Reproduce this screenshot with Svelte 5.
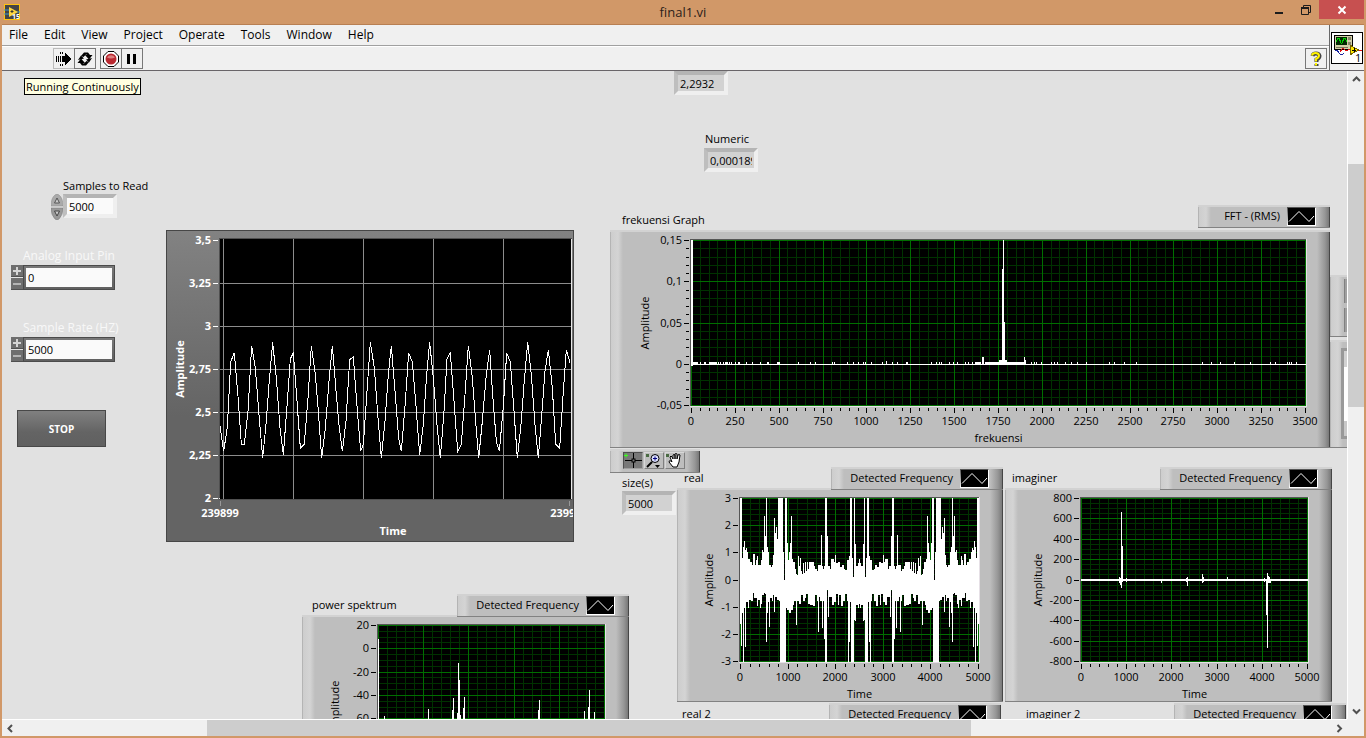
<script>
  const menus = ['File', 'Edit', 'View', 'Project', 'Operate', 'Tools', 'Window', 'Help'];

  // voltage trace, x/y in thirds of a pixel inside the plot
  const voltage = [
    [0, 562], [11, 637], [22, 565], [32, 369], [43, 341], [54, 472], [64, 615], [73, 615], [84, 517], [95, 320],
    [106, 387], [117, 527], [128, 657], [138, 557], [147, 437], [158, 310], [169, 417], [180, 567], [190, 647], [201, 502],
    [211, 360], [220, 342], [231, 487], [241, 627], [253, 615], [264, 477], [274, 320], [286, 407], [295, 517], [305, 657],
    [316, 567], [327, 427], [337, 320], [349, 467], [357, 557], [367, 637], [378, 547], [389, 362], [400, 354], [411, 502],
    [422, 635], [430, 617], [441, 457], [451, 310], [463, 387], [474, 537], [484, 657], [495, 547], [505, 407], [514, 320],
    [525, 457], [536, 597], [544, 637], [555, 502], [566, 342], [577, 369], [588, 502], [599, 647], [610, 557], [620, 407],
    [629, 310], [640, 417], [651, 557], [661, 657], [672, 517], [681, 360], [691, 342], [702, 487], [713, 637], [724, 615],
    [735, 467], [745, 320], [757, 417], [767, 547], [776, 657], [787, 547], [798, 417], [809, 332], [818, 467], [829, 607],
    [838, 637], [850, 502], [860, 342], [871, 369], [882, 517], [892, 657], [903, 557], [912, 437], [923, 310], [934, 407],
    [945, 557], [955, 657], [966, 517], [975, 397], [985, 332], [997, 447], [1007, 615], [1019, 627], [1030, 457], [1039, 332],
    [1050, 372]
  ];
  const voltagePoints = voltage.map(([x, y]) => `${x / 3},${y / 3}`).join(' ');

  // upper and lower edge of the real part, first half only: the spectrum is mirrored
  const upper = [
    [0, 3], [2, 0.8], [3, 1.2], [4, 1.4], [5, 1.1], [6, 1.15], [7, 1], [8, 0.75], [10, 0.65], [12, 0.55], [13, 0.95],
    [14, 0.95], [15, 0.55], [16, 0.7], [17, 0.85], [18, 0.55], [20, 0.55], [21, 0.7], [22, 1.1], [23, 1], [24, 2.35],
    [25, 1.6], [26, 3], [27, 1.2], [28, 1], [29, 0.55], [31, 0.45], [32, 0.55], [33, 0.9], [34, 2.25], [35, 1.7],
    [36, 1.95], [37, 1.5], [38, 3], [42, 3], [43, 1], [44, 0], [45, 3], [46, 3], [47, 1.35], [48, 0.7], [49, 1],
    [50, 1.35], [51, 2.35], [52, 0.75], [53, 0.65], [55, 0.4], [56, 0.2], [57, 0.15], [58, 0.85], [59, 0.5], [60, 0.8],
    [61, 0.3], [62, 0.2], [63, 0.6], [64, 0.25], [65, 0.65], [66, 0.3], [67, 0.65], [68, 0.4], [69, 0.65], [72, 0.65],
    [74, 0.5], [75, 0.4], [77, 0.3], [78, 0.55], [80, 0.55], [81, 1.65], [82, 0.5], [83, 0.4], [84, 0.5], [85, 3],
    [86, 3], [87, 1.6], [88, 0.5], [90, 0.4], [91, 0.75], [93, 0.75], [94, 0.65], [95, 0.9], [96, 0.6], [98, 0.65],
    [100, 0.45], [102, 0.55], [104, 0.4], [105, 0.35], [107, 0.7], [109, 0.85], [110, 3], [111, 3], [112, 0.8], [113, 0.1],
    [114, 3], [115, 1.3], [116, 0.5], [118, 0.6], [119, 0.75]
  ];
  const lower = [
    [0, -1.6], [1, -2.4], [2, -1.2], [3, -3], [4, -1], [5, -2.45], [6, -0.8], [8, -1], [9, -0.7], [11, -0.75],
    [13, -0.45], [14, -0.65], [16, -0.65], [17, -0.95], [18, -0.7], [20, -1], [21, -0.85], [22, -0.55], [24, -0.45],
    [25, -0.5], [26, -2.25], [27, -1.2], [28, -0.8], [29, -1.7], [30, -0.65], [32, -0.75], [33, -0.55], [34, -1.15],
    [35, -0.6], [37, -0.7], [39, -0.75], [40, -3], [45, -3], [46, -1], [47, -1.1], [49, -1.2], [51, -1.1], [53, -0.9],
    [54, -0.75], [56, -1.65], [57, -0.75], [59, -0.85], [61, -0.55], [63, -0.75], [65, -0.65], [66, -0.5], [68, -0.85],
    [70, -0.9], [73, -0.95], [75, -0.55], [77, -0.75], [78, -1.9], [79, -0.6], [80, -0.75], [82, -1.75], [83, -0.75],
    [84, -2.15], [85, -3], [86, -3], [87, -0.35], [88, -1.35], [89, -0.6], [91, -0.6], [92, -0.9], [94, -0.8],
    [96, -0.5], [98, -0.9], [99, -0.55], [101, -0.95], [103, -0.75], [105, -0.5], [107, -0.75], [108, -3], [109, -2.25],
    [110, -0.8], [111, -3], [113, -3], [114, -1.45], [115, -1.5], [116, -0.9], [118, -1], [119, -0.85]
  ];

  function edgeAt(edge, i) {
    const p = i > 119 ? 238 - i : i;
    let value = edge[0][1];
    for (const [x, v] of edge) if (x <= p) value = v;
    return value;
  }

  const realBars = Array.from({ length: 239 }, (_, i) => [i, edgeAt(upper, i), edgeAt(lower, i)]);

  const noise = [
    2, 3, 4, 5, 6, 9, 13, 14, 18, 19, 20, 21, 22, 23, 24, 25, 27, 29, 32, 34, 35, 36, 38, 40, 44, 47, 48, 55, 61, 69,
    76, 77, 86, 87, 88, 107, 119, 124, 141, 143, 156, 162, 167, 172, 174, 180, 191, 195, 201, 206, 215, 216, 240, 245,
    248, 250, 258, 262, 266, 274, 277, 281, 284, 285, 286, 287, 288, 289, 294, 296, 298, 340, 343, 345, 350, 360, 363,
    366, 374, 380, 386, 395, 418, 423, 433, 445, 511, 520, 529, 543, 559, 579, 584, 596, 598, 600, 605
  ];

  const fftBars = [
    [0, 0.15, -0.001], [1, 0.15, -0.001],
    ...noise.map((x) => [x, 0.0018, 0]),
    [195, 0.003, 0], [291, 0.008, 0], [292, 0.008, 0],
    ...Array.from({ length: 40 }, (_, i) => [294 + i, 0.0018, 0]),
    ...[308, 309, 310, 311, 312, 313, 314, 315].map((x) => [x, 0.004, 0]),
    [311, 0.115, 0], [312, 0.15, 0], [313, 0.05, 0], [333, 0.008, 0], [334, 0.004, 0]
  ];

  const imagBars = [
    [38, 20, -20], [39, 10, -45], [40, 660, -70], [41, 330, -15], [45, 10, -10], [80, 0, -20], [105, 10, -15],
    [106, 20, -55], [121, 50, -20], [122, 20, -15], [146, 20, 0], [183, 10, -15], [185, 0, -340], [186, 65, -665],
    [187, 30, -20], [188, 20, -20], [189, 0, -20]
  ];

  const powerBars = [
    [0, 8], [6, -58], [50, -52], [74, -53], [75, -43], [79, -56], [80, -13], [81, -27], [82, -57], [85, -51],
    [86, -42], [160, -53], [161, -44], [206, -54], [210, -50], [211, -36], [216, -55]
  ].map(([x, v]) => [x, v, -120]);

  const graphs = [
    {
      name: 'frekuensi Graph', x: 608, y: 159, w: 720, h: 218, labelX: 620, labelY: 141,
      plot: { x: 81, y: 10, w: 615, h: 166 }, yTitleX: 39, xTitle: 'frekuensi',
      xTicks: Array.from({ length: 15 }, (_, i) => String(i * 250)),
      yTicks: ['0,15', '0,1', '0,05', '0', '-0,05'],
      xMinor: 5, yMinor: 5, minorYTicks: true, max: 0.15, min: -0.05, base: 1, bars: fftBars,
      legend: { text: 'FFT - (RMS)', x: 1196, y: 134, w: 132 }
    },
    {
      name: 'real', x: 675, y: 417, w: 326, h: 214, labelX: 682, labelY: 399,
      plot: { x: 63, y: 10, w: 239, h: 164 }, yTitleX: 36, xTitle: 'Time',
      xTicks: ['0', '1000', '2000', '3000', '4000', '5000'],
      yTicks: ['3', '2', '1', '0', '-1', '-2', '-3'],
      xMinor: 5, yMinor: 5, max: 3, min: -3, base: 1, bars: realBars,
      legend: { text: 'Detected Frequency', x: 829, y: 396, w: 172 }
    },
    {
      name: 'imaginer', x: 1003, y: 417, w: 327, h: 214, labelX: 1010, labelY: 399,
      plot: { x: 76, y: 10, w: 227, h: 164 }, yTitleX: 37, xTitle: 'Time',
      xTicks: ['0', '1000', '2000', '3000', '4000', '5000'],
      yTicks: ['800', '600', '400', '200', '0', '-200', '-400', '-600', '-800'],
      xMinor: 5, yMinor: 4, max: 800, min: -800, base: 2, bars: imagBars,
      legend: { text: 'Detected Frequency', x: 1158, y: 396, w: 172 }
    },
    {
      name: 'power spektrum', x: 300, y: 544, w: 327, h: 214, labelX: 310, labelY: 526,
      plot: { x: 76, y: 10, w: 227, h: 164 }, yTitleX: 37, xTitle: 'Time',
      xTicks: ['0', '1000', '2000', '3000', '4000', '5000'],
      yTicks: ['20', '0', '-20', '-40', '-60', '-80', '-100', '-120'],
      xMinor: 5, yMinor: 4, max: 20, min: -120, base: 0, bars: powerBars,
      legend: { text: 'Detected Frequency', x: 455, y: 523, w: 172 }
    },
    {
      name: 'real 2', x: 674, y: 653, w: 326, h: 214, labelX: 680, labelY: 635,
      plot: { x: 63, y: 10, w: 239, h: 164 }, yTitleX: 36, xTitle: 'Time',
      xTicks: [], yTicks: [], xMinor: 5, yMinor: 5, max: 3, min: -3, base: 0, bars: [],
      legend: { text: 'Detected Frequency', x: 827, y: 632, w: 172 }
    },
    {
      name: 'imaginer 2', x: 1018, y: 653, w: 327, h: 214, labelX: 1024, labelY: 635,
      plot: { x: 76, y: 10, w: 227, h: 164 }, yTitleX: 37, xTitle: 'Time',
      xTicks: [], yTicks: [], xMinor: 5, yMinor: 5, max: 3, min: -3, base: 0, bars: [],
      legend: { text: 'Detected Frequency', x: 1172, y: 632, w: 172 }
    }
  ];

  function steps(ticks, minor, start, size) {
    const count = (ticks.length - 1) * minor;
    const out = [];
    for (let i = 0; i <= count; i++) {
      out.push({ pos: Math.round(start + (i * (size - 1)) / count), major: i % minor === 0, text: ticks[i / minor] });
    }
    // bright lines last so they stay on top
    return out.sort((a, b) => a.major - b.major);
  }

  function barPath(g) {
    const { x, y, h } = g.plot;
    const at = (v) => Math.round(y + ((g.max - v) / (g.max - g.min)) * (h - 1));
    return g.bars.map(([px, top, bottom]) => `M${x + px} ${at(top)}h1V${at(bottom) + 1}h-1z`).join('');
  }

  const zeroLine = (g) => Math.round(g.plot.y + (g.max / (g.max - g.min)) * (g.plot.h - 1));

  const clusters = [
    { id: 'pin', label: 'Analog Input Pin', value: '0', y: 177 },
    { id: 'rate', label: 'Sample Rate (HZ)', value: '5000', y: 249 }
  ];

  const timeTicks = ['3,5', '3,25', '3', '2,75', '2,5', '2,25', '2'];
</script>

{#snippet graphPanel(g)}
  {@const p = g.plot}
  {@const xs = steps(g.xTicks, g.xMinor, p.x, p.w)}
  {@const ys = steps(g.yTicks, g.yMinor, p.y, p.h)}
  <span class="caption" style="left: {g.labelX}px; top: {g.labelY}px">{g.name}</span>
  <figure class="panel" style="left: {g.x}px; top: {g.y}px; width: {g.w}px; height: {g.h}px">
    <svg width={g.w} height={g.h} shape-rendering="crispEdges" role="img" aria-label={g.name}>
      <rect x={p.x - 1} y={p.y - 1} width={p.w + 2} height={p.h + 2} fill="#e6e0e6" />
      <path d="M{p.x - 1} {p.y + p.h}V{p.y - 1}H{p.x + p.w}v1H{p.x}V{p.y + p.h}z" fill="#555" />
      <rect x={p.x} y={p.y} width={p.w} height={p.h} fill="#000" />
      {#each xs as t}
        {#if !t.major}<rect x={t.pos} y={p.y} width="1" height={p.h} fill="#003200" />{/if}
      {/each}
      {#each ys as t}
        <rect x={p.x} y={t.pos} width={p.w} height="1" fill={t.major ? '#006e00' : '#003200'} />
      {/each}
      {#each xs as t}
        {#if t.major}<rect x={t.pos} y={p.y} width="1" height={p.h} fill="#006e00" />{/if}
        <rect x={t.pos} y={p.y + p.h + 2} width="1" height={t.major ? 5 : 3} fill="#000" />
        {#if t.text}<text x={t.pos} y={p.y + p.h + 19} text-anchor="middle">{t.text}</text>{/if}
      {/each}
      {#each ys as t}
        {#if t.major}
          <rect x={p.x - 7} y={t.pos} width="5" height="1" fill="#000" />
          <text x={p.x - 9} y={t.pos + 4} text-anchor="end">{t.text}</text>
        {:else if g.minorYTicks}
          <rect x={p.x - 5} y={t.pos} width="3" height="1" fill="#000" />
        {/if}
      {/each}
      {#if g.base}
        <rect x={p.x} y={zeroLine(g) + 1 - g.base} width={p.w} height={g.base} fill="#fff" />
      {/if}
      <path d={barPath(g)} fill="#fff" />
      <text class="title" x={p.x + p.w / 2} y={p.y + p.h + 36} text-anchor="middle">{g.xTitle}</text>
      <text class="title" transform="translate({g.yTitleX} {p.y + p.h / 2}) rotate(-90)" text-anchor="middle">Amplitude</text>
    </svg>
  </figure>
  <div class="panel legend" style="left: {g.legend.x}px; top: {g.legend.y}px; width: {g.legend.w}px">
    <span>{g.legend.text}</span>
    <svg width="29" height="19" viewBox="0 0 29 19">
      <rect width="29" height="19" fill="#fff" />
      <path d="M0 19V0h29L28 1H1z" fill="#555" />
      <rect x="1" y="1" width="27" height="17" />
      <path d="M2 14.500L12 4.500L22 14.500L27 9" fill="none" stroke="#fff" />
    </svg>
  </div>
{/snippet}

<div class="window">
  <header class="titlebar">
    <svg class="logo" width="16" height="16" viewBox="0 0 16 16">
      <rect width="16" height="16" fill="#ffc20e" />
      <rect x="1" y="1" width="14" height="14" fill="#454545" />
      <path d="M0 6h5M0 10h5M12 8h4" stroke="#3d96c8" stroke-width="1" />
      <path d="M5 3v10l9-5z" fill="#ffd63d" />
      <path d="M6.500 7.500h3M8 6v3" stroke="#333" />
      <text x="8" y="15" class="tiny">15</text>
    </svg>
    <h1>final1.vi</h1>
    <div class="window-buttons">
      <button aria-label="Minimize">
        <svg width="12" height="12" viewBox="0 0 12 12"><path d="M2 8h8v2H2z" fill="#1c1c1c" /></svg>
      </button>
      <button aria-label="Restore">
        <svg width="12" height="12" viewBox="0 0 12 12" fill="none" stroke="#1c1c1c"><path d="M3.500 3V1.500h7v7H9" /><path d="M1.500 4h7v6.500h-7z" /><path d="M1 4h8" stroke-width="2" /></svg>
      </button>
      <button class="close" aria-label="Close">
        <svg width="10" height="10" viewBox="0 0 10 10"><path d="M1.500 1.500l7 7M8.500 1.500l-7 7" stroke="#fff" stroke-width="2" /></svg>
      </button>
    </div>
  </header>

  <div class="bars">
    <div class="bars-left">
      <nav class="menubar">
        {#each menus as menu}
          <a href="#{menu.toLowerCase()}">{menu}</a>
        {/each}
      </nav>
      <div class="toolbar">
        <button class="tool pale" aria-label="Run">
          <svg width="16" height="14" viewBox="0 0 16 14" shape-rendering="crispEdges">
            <path d="M0 4h1v6H0zM2 4h1v6H2zM4 4h1v6H4zM4 0h1v2H4zM6 0h1v2H6zM4 12h1v2H4zM6 12h1v2H6z" />
            <path d="M6 4h3V1l6 6-6 6v-3H6z" />
          </svg>
        </button>
        <button class="tool" aria-label="Run Continuously">
          <svg width="16" height="14" viewBox="0 0 16 14">
            <path d="M4 4L7 0.500h4L13 3h2.500l-3.500 4.500L8 3h2.500L9 2.500 6.500 5z" />
            <path d="M12 10l-3 3.500H5L3 11H0.500L4 6.500 8 11H5.500l1.500 0.500L9.500 9z" />
            <path d="M1 8L4 3.500l3 3zM15 6l-3 4.500-3-3z" />
          </svg>
        </button>
        <button class="tool gap" aria-label="Abort">
          <svg width="16" height="16" viewBox="0 0 16 16">
            <path d="M5 0.500h6l4.500 4.500v6L11 15.500H5L0.500 11V5z" fill="#fff" stroke="#000" />
            <circle cx="8" cy="8" r="5.500" fill="#b92830" />
            <path d="M4 6.500a4.500 4 0 0 1 8 0q-4 2-8 0z" fill="#dc8080" />
          </svg>
        </button>
        <button class="tool" aria-label="Pause">
          <svg width="12" height="12" viewBox="0 0 12 12"><path d="M1 1h3v10H1zM7 1h3v10H7z" /></svg>
        </button>
        <button class="tool help" aria-label="Help">
          <svg width="14" height="16" viewBox="0 0 14 16">
            <path d="M3.500 5Q4 2.500 7 2.500t3.500 2.500Q10.500 7 7.500 8.500v2.500M7.500 13v2" fill="none" stroke="#444" stroke-width="4" />
            <path d="M3 4.500Q3.500 2 6.500 2t3.500 2.500Q10 6.500 7 8v2.500M7 12v2.500" fill="none" stroke="#fff200" stroke-width="2" />
          </svg>
        </button>
      </div>
    </div>
    <div class="vi-icon">
      <svg width="32" height="32" viewBox="0 0 32 32" shape-rendering="crispEdges">
        <rect x="0.500" y="0.500" width="31" height="31" fill="#fff" stroke="#000" />
        <rect x="3.500" y="3.500" width="18" height="14" fill="#d2cfa8" stroke="#000" />
        <rect x="5" y="5" width="11" height="8" fill="#002800" />
        <path d="M5 10l2-4h1l2 5h1l2-5h1l2 4" fill="none" stroke="#00d000" />
        <path d="M17 5h3v3h-3zM17 10h3v3h-3z" fill="#87876c" />
        <path d="M5 15h12" stroke="#77775c" />
        <path d="M4 18h2l2 3q3 3 5 0" fill="none" stroke="#1824a0" />
        <path d="M9 20l3-4 3 3 4-2h3M27 18h4" fill="none" stroke="#e01010" />
        <path d="M19.500 13.500l8 4.500-8 4.500z" fill="#ffe800" stroke="#786400" />
        <path d="M21 18h4M23 16v4" stroke="#000" />
        <text x="24" y="30">1</text>
      </svg>
    </div>
  </div>

  <div class="body">
    <main class="canvas">
      <div class="tooltip" role="tooltip">Running Continuously</div>

      <div class="readout mean">
        <input class="sunken" readonly value="2,2932" aria-label="Mean" />
      </div>
      <div class="readout numeric">
        <label for="numeric">Numeric</label>
        <input id="numeric" class="sunken" readonly value="0,000189" />
      </div>

      <div class="samples">
        <label for="samples">Samples to Read</label>
        <div class="row">
          <div class="spinner">
            <button aria-label="Increase samples">
              <svg width="12" height="13" viewBox="0 0 12 13"><path d="M0 12Q0 4 4 1q2-2 4 0 4 3 4 11z" fill="#aaa" stroke="#888" stroke-width="0.500" /><path d="M3.500 9L6 4l2.500 5z" fill="#ccc" stroke="#555" /></svg>
            </button>
            <button aria-label="Decrease samples">
              <svg width="12" height="13" viewBox="0 0 12 13"><path d="M0 1h12q0 7-4 11-2 2-4 0Q0 8 0 1z" fill="#999" stroke="#777" stroke-width="0.500" /><path d="M3.500 4L6 9l2.500-5z" fill="#ccc" stroke="#444" /></svg>
            </button>
          </div>
          <input id="samples" class="sunken white" value="5000" />
        </div>
      </div>

      {#each clusters as c}
        <div class="cluster" style="top: {c.y}px">
          <label for={c.id}>{c.label}</label>
          <div class="row">
            <div class="plusminus">
              <button aria-label="Increase {c.label}"><svg width="10" height="10" viewBox="0 0 10 10"><path d="M1 5h8M5 1v8" stroke="#d4d4d4" stroke-width="2" /></svg></button>
              <button aria-label="Decrease {c.label}"><svg width="10" height="10" viewBox="0 0 10 10"><path d="M1 5h8" stroke="#b4b4b4" stroke-width="2" /></svg></button>
            </div>
            <div class="dark-field"><input id={c.id} value={c.value} /></div>
          </div>
        </div>
      {/each}

      <button class="stop">STOP</button>

      <figure class="time-chart">
        <svg width="406" height="310" role="img" aria-label="Amplitude over time">
          <g shape-rendering="crispEdges">
            <rect x="52" y="7" width="353" height="262" fill="#505050" />
            <path d="M52 268h353V8h-1v259H52z" fill="#e8e8e8" />
            <rect x="53" y="8" width="351" height="260" fill="#000" />
            {#each [56, 126, 196, 266, 336] as x}
              <rect {x} y="8" width="1" height="260" fill="#8c8c8c" />
            {/each}
            {#each timeTicks as t, i}
              {@const y = 9 + i * 43}
              {#if i > 0 && i < 6}<rect x="53" {y} width="351" height="1" fill="#8c8c8c" />{/if}
              <rect x="46" {y} width="5" height="1" fill="#fff" />
            {/each}
            <path d="M53 270h1v5h-1zM402 270h1v5h-1z" fill="#999" />
            <polyline points={voltagePoints} transform="translate(53 8)" fill="none" stroke="#fff" />
          </g>
          {#each timeTicks as t, i}
            <text x="44" y={13 + i * 43} text-anchor="end">{t}</text>
          {/each}
          <text x="53" y="286" text-anchor="middle">239899</text>
          <text x="402" y="286" text-anchor="middle">239999</text>
          <text x="226" y="304" text-anchor="middle">Time</text>
          <text transform="translate(17 138) rotate(-90)" text-anchor="middle">Amplitude</text>
        </svg>
      </figure>

      {#each graphs as g}
        {@render graphPanel(g)}
      {/each}

      <div class="panel palette">
        <button class="pressed" aria-label="Cursor">
          <svg width="18" height="15" viewBox="0 0 18 15"><path d="M1 7.500h7M11 7.500h7M9.500 0v6M9.500 9v6" stroke="#000" /><rect x="8" y="6" width="3" height="3" fill="none" stroke="#000" /><path d="M0 2.500h4M2 0.500v4" stroke="#3cff1e" /></svg>
        </button>
        <button aria-label="Zoom">
          <svg width="18" height="15" viewBox="0 0 18 15"><rect x="1" y="1" width="3" height="3" fill="#4a6b43" /><path d="M7 9l-5 5" stroke="#000" stroke-width="2" /><circle cx="10" cy="5.500" r="4" fill="#dde0ff" stroke="#000" /><path d="M8 5.500h4M10 3.500v4" stroke="#00007c" /><path d="M10 12h5l-2.500 3z" /></svg>
        </button>
        <button aria-label="Pan">
          <svg width="18" height="15" viewBox="0 0 18 15"><rect x="0" y="1" width="3" height="3" fill="#4a6b43" /><path d="M7 14L3 9q0-2 2-1l1 1-2-5q1-2 2 0l1 2V2q1-1 2 0v4-5q1-1 2 0v5l1-4q1-1 2 0l-1 7-2 5z" fill="#fff" stroke="#000" /></svg>
        </button>
      </div>

      <div class="readout size">
        <label for="size">size(s)</label>
        <input id="size" class="sunken" readonly value="5000" />
      </div>

      <div class="panel side-top"><i></i><i></i></div>
      <div class="panel side-bottom"><i></i></div>
    </main>

    <div class="vscroll">
      <button aria-label="Scroll up"><svg width="9" height="7" viewBox="0 0 9 7"><path d="M1 5l3.500-3.500L8 5" /></svg></button>
      <div class="track"><div class="thumb"></div></div>
      <button aria-label="Scroll down"><svg width="9" height="7" viewBox="0 0 9 7"><path d="M1 1.500L4.500 5 8 1.500" /></svg></button>
    </div>
    <div class="hscroll">
      <button aria-label="Scroll left"><svg width="7" height="9" viewBox="0 0 7 9"><path d="M5 1L1.500 4.500 5 8" /></svg></button>
      <div class="track"><div class="thumb"></div></div>
      <button aria-label="Scroll right"><svg width="7" height="9" viewBox="0 0 7 9"><path d="M1.500 1L5 4.500 1.500 8" /></svg></button>
    </div>
  </div>
</div>

<style>
  .window {
    height: 100vh;
    box-sizing: border-box;
    display: flex;
    flex-direction: column;
    padding: 0 2px 2px;
    background: #d19868;
    color: #000;
    font: 11px/16px "Open Sans", "Noto Sans", sans-serif;
    overflow: hidden;
  }

  button {
    display: flex;
    align-items: center;
    justify-content: center;
    padding: 0;
    border: 0;
    background: none;
    font: inherit;
  }

  input {
    box-sizing: border-box;
    min-width: 0;
    font: inherit;
    color: #000;
  }

  figure {
    margin: 0;
  }

  svg {
    display: block;
  }

  .row {
    display: flex;
  }

  .titlebar {
    position: relative;
    flex: none;
    height: 24px;
    display: flex;
    align-items: center;
    justify-content: center;
    border-bottom: 1px solid #b87f52;
  }

  .titlebar h1 {
    margin: 0;
    font-size: 13px;
    line-height: 24px;
    font-weight: normal;
    color: #2c2019;
  }

  .logo {
    position: absolute;
    left: 2px;
    top: 4px;
  }

  .tiny {
    font-size: 7px;
    font-weight: bold;
    fill: #fff;
  }

  .window-buttons {
    position: absolute;
    right: 0;
    top: 0;
    height: 19px;
    display: flex;
  }

  .window-buttons button {
    width: 27px;
  }

  .window-buttons .close {
    width: 45px;
    background: #c75050;
  }

  .bars {
    flex: none;
    display: flex;
    background: #f0f0f0;
    border-bottom: 1px solid #696569;
  }

  .bars-left {
    flex: 1;
    border-right: 1px solid #696969;
  }

  .menubar {
    display: flex;
    gap: 16px;
    padding: 0 7px;
    height: 20px;
    align-items: center;
    border-bottom: 1px solid #a0a0a0;
  }

  .menubar a {
    color: #000;
    font-size: 12px;
    text-decoration: none;
  }

  .toolbar {
    display: flex;
    height: 21px;
    padding: 1px 2px 1px 51px;
    border-top: 1px solid #fff;
  }

  .tool {
    box-sizing: border-box;
    width: 22px;
    height: 21px;
    border: 1px solid #787878;
    margin-right: -1px;
  }

  .tool.pale {
    border-color: #bcbcbc;
  }

  .tool.gap {
    margin-left: 5px;
  }

  .tool.help {
    margin: 0 0 0 auto;
  }

  .vi-icon {
    width: 34px;
    display: flex;
    align-items: center;
    justify-content: center;
  }

  .body {
    flex: 1;
    min-height: 0;
    display: grid;
    grid-template: minmax(0, 1fr) 17px / minmax(0, 1fr) 17px;
    background: #f0f0f0;
  }

  /* free-form front panel: every control sits where it was dropped */
  .canvas {
    position: relative;
    overflow: hidden;
    background: #e1e1e1;
  }

  .tooltip,
  .readout,
  .samples,
  .cluster,
  .stop,
  .time-chart,
  .panel,
  .caption {
    position: absolute;
  }

  .caption {
    white-space: nowrap;
  }

  .tooltip {
    left: 22px;
    top: 7px;
    padding: 0 1px;
    border: 1px solid #000;
    background: #ffffe1;
    line-height: 15px;
  }

  .readout,
  .samples {
    display: flex;
    flex-direction: column;
  }

  .sunken {
    width: 54px;
    height: 24px;
    padding: 0 2px;
    border: 4px solid;
    border-color: #b4b4b4 #efefef #efefef #bebebe;
    background: #d2d2d2;
    outline: 0;
  }

  .sunken.white {
    width: 54px;
    background: #fafafa;
  }

  .mean {
    left: 672px;
    top: 0;
  }

  .numeric {
    left: 702px;
    top: 60px;
  }

  .numeric label {
    padding: 0 0 1px 1px;
  }

  .size {
    left: 620px;
    top: 404px;
  }

  .samples {
    left: 49px;
    top: 107px;
  }

  .samples label {
    padding-left: 12px;
  }

  .spinner {
    width: 12px;
  }

  .cluster {
    left: 9px;
  }

  .cluster label {
    display: block;
    padding-left: 12px;
    height: 17px;
    font-size: 12px;
    color: #f8f8f8;
  }

  .plusminus {
    display: grid;
    gap: 1px;
  }

  .plusminus button {
    width: 12px;
    height: 12px;
    background: #6e6e6e;
    border-bottom: 1px solid #505050;
    box-sizing: border-box;
  }

  .dark-field {
    box-sizing: border-box;
    width: 92px;
    height: 25px;
    padding: 2px;
    background: linear-gradient(#787878, #606060);
    border: 1px solid #4b4b4b;
    display: flex;
  }

  .dark-field input {
    flex: 1;
    padding: 0 2px;
    border: 0;
    background: #fafafa;
  }

  .stop {
    left: 15px;
    top: 339px;
    width: 89px;
    height: 37px;
    border: 1px solid #484848;
    background: linear-gradient(#808080, #646464 60%, #606060);
    color: #fff;
    font-weight: bold;
    font-size: 10px;
  }

  .time-chart {
    left: 164px;
    top: 159px;
    border: 1px solid #464646;
    background: linear-gradient(#828282, #646464 60%);
    overflow: hidden;
  }

  .time-chart text {
    fill: #fff;
    font-weight: bold;
    font-size: 11px;
  }

  .panel {
    box-sizing: border-box;
    border-bottom: 1px solid #828282;
    background:
      linear-gradient(#d2d2d2, #d2d2d2) 0 0 / 100% 2px no-repeat,
      linear-gradient(90deg, #b4b4b4 0, #b4b4b4 1px, #cdcdcd 1px, #d4d4d4 8px, #bebebe 13px,
        #bebebe calc(100% - 13px), #969696 calc(100% - 5px), #787878 calc(100% - 1px), #464646 calc(100% - 1px));
  }

  .legend {
    height: 23px;
    display: flex;
    align-items: center;
    justify-content: flex-end;
    gap: 7px;
    padding-right: 14px;
    white-space: nowrap;
  }

  .palette {
    left: 608px;
    top: 378px;
    width: 90px;
    height: 24px;
    display: flex;
    align-items: center;
    gap: 1px;
    padding-left: 13px;
  }

  .palette button {
    box-sizing: border-box;
    width: 20px;
    height: 17px;
    border: 1px solid;
    border-color: #d8d8d8 #808080 #808080 #d8d8d8;
    background: #bebebe;
  }

  .palette .pressed {
    background: #787878;
    border-color: #505050 #a0a0a0 #a0a0a0 #505050;
  }

  .side-top,
  .side-bottom {
    left: 1328px;
    width: 40px;
    display: flex;
    flex-direction: column;
    gap: 5px;
    padding: 4px 0 4px 14px;
  }

  .side-top {
    top: 204px;
    height: 62px;
  }

  .side-bottom {
    top: 269px;
    height: 108px;
    padding: 8px 0 8px 11px;
  }

  .side-top i {
    flex: 1;
    background: #a0a0a0;
    border-left: 1px solid #808080;
  }

  .side-bottom i {
    flex: 1;
    background: linear-gradient(#d2d2d2 16px, #fff 16px, #fff 70px, #c8c8c8 70px);
    border: 3px solid #999;
  }

  .vscroll,
  .hscroll {
    display: flex;
    background: #f0f0f0;
  }

  .vscroll {
    flex-direction: column;
    border-left: 1px solid #fff;
  }

  .hscroll {
    border-top: 1px solid #fff;
  }

  .vscroll button,
  .hscroll button {
    flex: none;
    width: 16px;
    height: 16px;
  }

  .vscroll path,
  .hscroll path {
    fill: none;
    stroke: #505050;
    stroke-width: 2;
  }

  .track {
    flex: 1;
    display: flex;
  }

  .vscroll .track {
    flex-direction: column;
    padding-top: 77px;
  }

  .hscroll .track {
    padding-left: 189px;
  }

  .thumb {
    background: #cdcdcd;
  }

  .vscroll .thumb {
    height: 45%;
  }

  .hscroll .thumb {
    width: 68%;
  }
</style>
